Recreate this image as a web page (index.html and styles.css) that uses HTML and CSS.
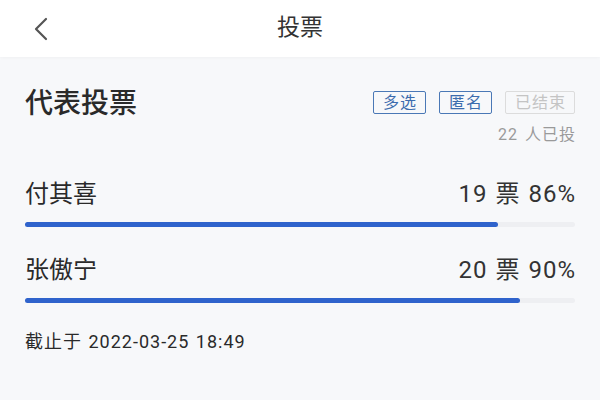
FILE: index.html
```html
<!DOCTYPE html>
<html lang="zh">
<head>
<meta charset="utf-8">
<link rel="stylesheet" href="styles.css">
</head>
<body>
<div class="page">
  <header class="topbar">
    <span class="back">
      <svg width="16" height="24" viewBox="0 0 16 24"><path d="M13 2 L3 12 L13 22" fill="none" stroke="#555" stroke-width="2.2" stroke-linecap="round" stroke-linejoin="round"/></svg>
    </span>
    <h1 class="title">投票</h1>
  </header>
  <main class="card">
    <div class="head">
      <h2 class="vote-title">代表投票</h2>
      <div class="meta">
        <div class="tags">
          <span class="tag">多选</span>
          <span class="tag">匿名</span>
          <span class="tag tag-off">已结束</span>
        </div>
        <div class="count">22 人已投</div>
      </div>
    </div>
    <div class="option">
      <div class="opt-row"><span class="name">付其喜</span><span class="stat">19 票 86%</span></div>
      <div class="track"><div class="fill" style="width:86%"></div></div>
    </div>
    <div class="option">
      <div class="opt-row"><span class="name">张傲宁</span><span class="stat">20 票 90%</span></div>
      <div class="track"><div class="fill" style="width:90%"></div></div>
    </div>
    <div class="deadline">截止于 2022-03-25 18:49</div>
  </main>
</div>
</body>
</html>
```
FILE: styles.css
```css
* { box-sizing: border-box; margin: 0; padding: 0; }
html, body { width: 600px; height: 400px; overflow: hidden; }
body {
  background: #f7f8fa;
  font-family: Roboto, "Noto Sans CJK SC", sans-serif;
  color: #222;
}
.topbar {
  height: 57px;
  background: #fff;
  display: flex;
  align-items: center;
  justify-content: center;
  position: relative;
  box-shadow: 0 1px 3px rgba(0,0,0,0.03);
}
.back {
  position: absolute;
  left: 33px;
  top: 17px;
  width: 16px;
  height: 24px;
  display: flex;
}
.title {
  font-size: 23px;
  font-weight: 400;
  color: #333;
  line-height: 30px;
  margin-top: -1px;
}
.card {
  padding: 0 25px;
}
.head {
  display: flex;
  justify-content: space-between;
  align-items: flex-start;
  padding-top: 30px;
}
.vote-title {
  font-size: 28px;
  font-weight: 500;
  line-height: 34px;
  color: #2a2a2a;
}
.meta {
  display: flex;
  flex-direction: column;
  align-items: flex-end;
  padding-top: 4px;
}
.tags {
  display: flex;
  gap: 13px;
}
.tag {
  height: 23px;
  padding: 0 8px 0 9px;
  border: 1.5px solid #4a78b6;
  border-radius: 2px;
  color: #3c6cae;
  font-size: 16px;
  line-height: 20px;
  letter-spacing: 1px;
  display: flex;
  align-items: center;
}
.tag-off {
  border-color: #dcdcdc;
  color: #c4c4c4;
}
.count {
  margin-top: 11px;
  font-size: 16px;
  line-height: 20px;
  color: #9a9a9a;
  letter-spacing: 1px;
  word-spacing: 2px;
  margin-right: -1px;
}
.option {
  margin-top: 31px;
}
.option + .option { margin-top: 25px; }
.opt-row {
  display: flex;
  justify-content: space-between;
  align-items: center;
  height: 30px;
}
.name {
  font-size: 24px;
  color: #2a2a2a;
}
.stat {
  font-size: 24px;
  color: #333;
  letter-spacing: 1px;
  word-spacing: 1px;
  margin-right: -1px;
}
.track {
  margin-top: 16px;
  height: 5px;
  background: #eeeff2;
  border-radius: 3px;
}
.fill {
  height: 100%;
  background: #2f63cc;
  border-radius: 3px;
}
.deadline {
  margin-top: 27px;
  font-size: 18px;
  line-height: 24px;
  color: #2a2a2a;
  letter-spacing: 1px;
  word-spacing: 1px;
}
```
